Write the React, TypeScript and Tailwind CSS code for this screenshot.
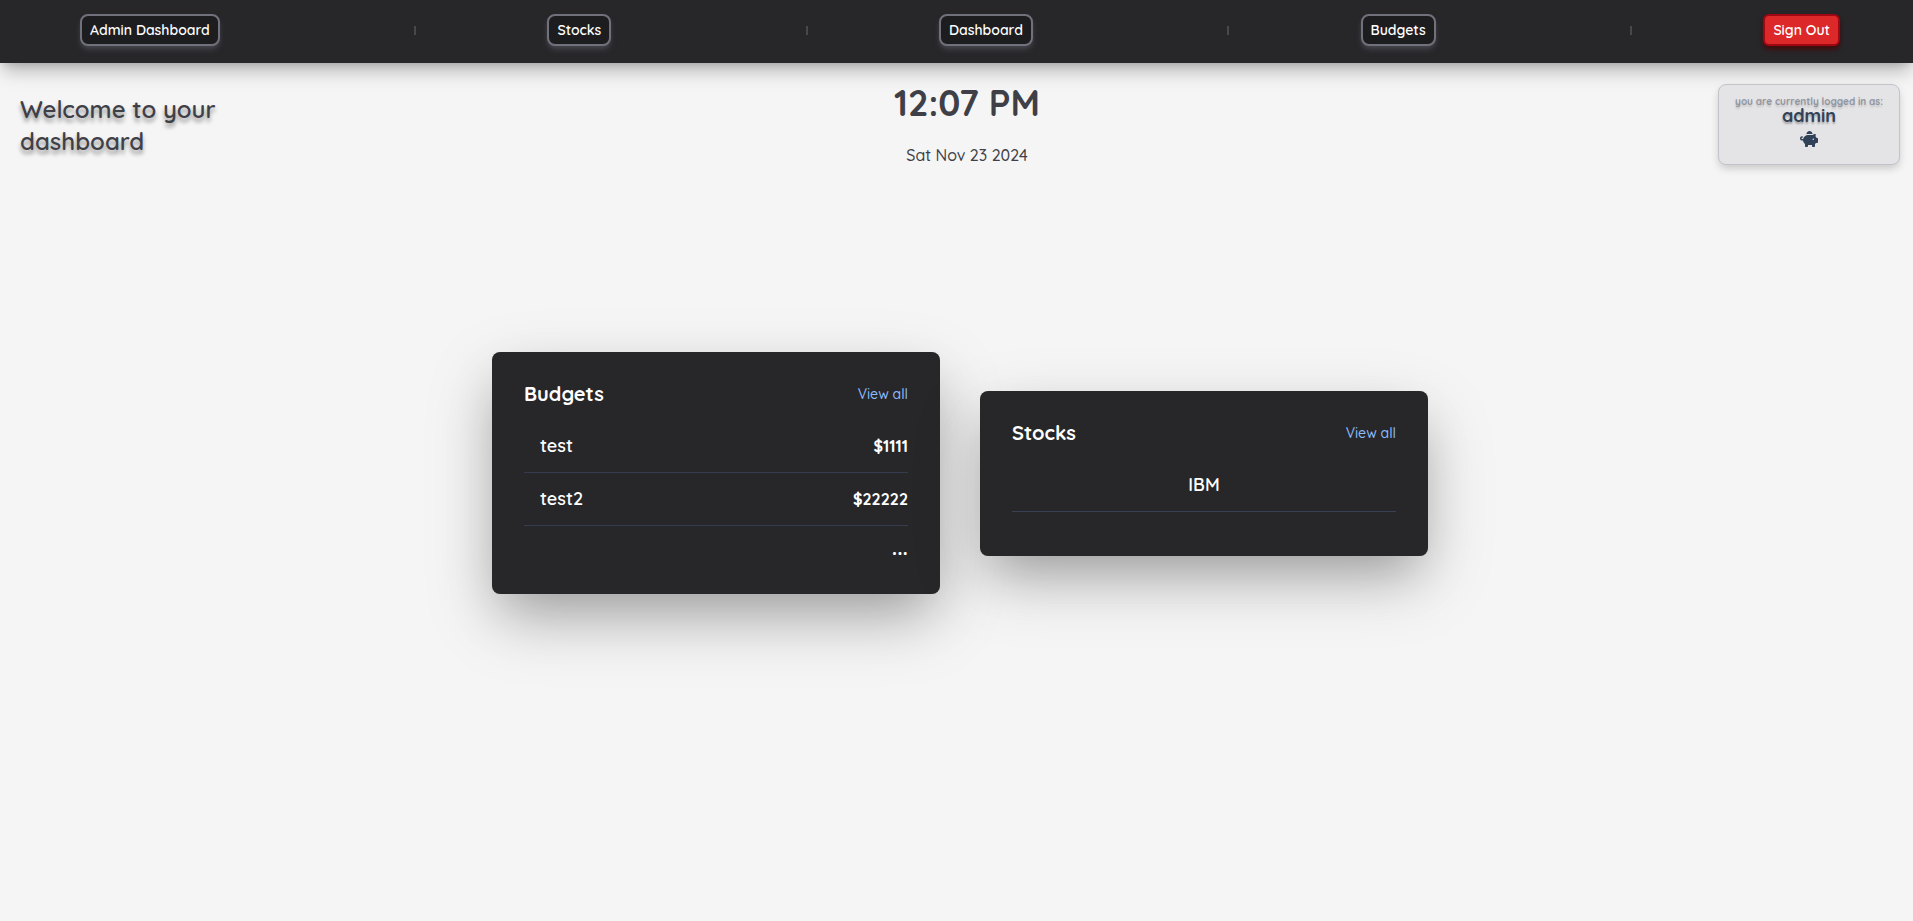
import { Fragment } from 'react';
import { FaPiggyBank } from 'react-icons/fa6';

const links = ['Admin Dashboard', 'Stocks', 'Dashboard', 'Budgets'];

const budgets = [
  { name: 'test', amount: '$1111' },
  { name: 'test2', amount: '$22222' },
];

const stocks = ['IBM'];

function Navbar() {
  return (
    <nav className="flex h-[63px] items-start bg-[#27272a] pt-3.5 pr-[73px] pl-20 text-sm font-semibold shadow-[0_10px_18px_-3px_rgba(0,0,0,0.28),0_4px_8px_-3px_rgba(0,0,0,0.12)]">
      {links.map((label) => (
        <Fragment key={label}>
          <a
            href="#"
            className="rounded-lg border-2 border-zinc-500 bg-[#1d1d20] px-2 py-1 text-white shadow-[0_4px_6px_-1px_#45454c,0_2px_4px_-2px_#45454c]"
          >
            {label}
          </a>
          <div className="grid h-8 flex-1 grid-cols-[3fr_2fr] items-center">
            <span className="h-[9px] border-r-2 border-[#47474c]" />
          </div>
        </Fragment>
      ))}
      <button
        type="button"
        className="rounded-md border-2 border-red-800 bg-[#dc2828] px-2 py-1 text-white shadow-[0_4px_6px_-1px_#450a0a,0_2px_4px_-2px_#450a0a]"
      >
        Sign Out
      </button>
    </nav>
  );
}

function Header() {
  return (
    <header className="flex items-start justify-between pt-5 pr-[13px] pl-5">
      <h1 className="w-[196px] pt-2.5 text-2xl font-semibold text-zinc-700 text-shadow-[0_4px_4px_rgba(0,0,0,0.4)]">
        Welcome to your dashboard
      </h1>
      <div className="text-center text-zinc-700">
        <p className="text-4xl font-bold">12:07 PM</p>
        <p className="mt-5 text-base font-medium">Sat Nov 23 2024</p>
      </div>
      <section className="mt-px flex h-[81px] w-[182px] flex-col items-center rounded-lg border border-[#c3c3ca] bg-zinc-200 pt-3 text-slate-700 shadow-[0_4px_8px_-1px_rgba(0,0,0,0.2)]">
        <p className="text-[10px] leading-[10px] font-bold text-[#9195a0] text-shadow-[0_2px_2px_rgba(0,0,0,0.15)]">
          you are currently logged in as:
        </p>
        <p className="text-lg leading-[18px] font-bold text-shadow-[0_2px_2px_rgba(0,0,0,0.3)]">admin</p>
        <FaPiggyBank className="mt-[5px] size-[18px]" />
      </section>
    </header>
  );
}

function CardHeader({ title }: { title: string }) {
  return (
    <div className="mb-4 flex items-center justify-between">
      <h2 className="text-xl leading-5 font-bold text-white">{title}</h2>
      <a href="#" className="text-sm leading-5 font-medium text-[#8bbcfb]">
        View all
      </a>
    </div>
  );
}

const cardClass =
  'w-[448px] rounded-lg bg-[#27272a] p-8 text-white shadow-[0_25px_70px_rgba(0,0,0,0.17),0_25px_50px_-12px_rgba(0,0,0,0.25)]';

export default function App() {
  return (
    <div className="min-h-screen bg-[#f5f5f5] font-[Quicksand,Lato,sans-serif]">
      <Navbar />
      <Header />
      <main className="flex items-center justify-center gap-10 pt-[185px] pl-[7px]">
        <section className={cardClass}>
          <CardHeader title="Budgets" />
          <ul className="divide-y divide-[#363c50]">
            {budgets.map((budget) => (
              <li key={budget.name} className="flex items-center justify-between py-3 pl-4">
                <span className="text-lg font-semibold">{budget.name}</span>
                <span className="text-base font-bold">{budget.amount}</span>
              </li>
            ))}
            <li className="pt-2 pb-1 text-right text-2xl leading-6 font-semibold">...</li>
          </ul>
        </section>
        <section className={cardClass}>
          <CardHeader title="Stocks" />
          <ul className="divide-y divide-gray-700">
            {stocks.map((symbol) => (
              <li key={symbol} className="py-3 text-center text-lg font-semibold">
                {symbol}
              </li>
            ))}
            <li className="pt-3" />
          </ul>
        </section>
      </main>
    </div>
  );
}
